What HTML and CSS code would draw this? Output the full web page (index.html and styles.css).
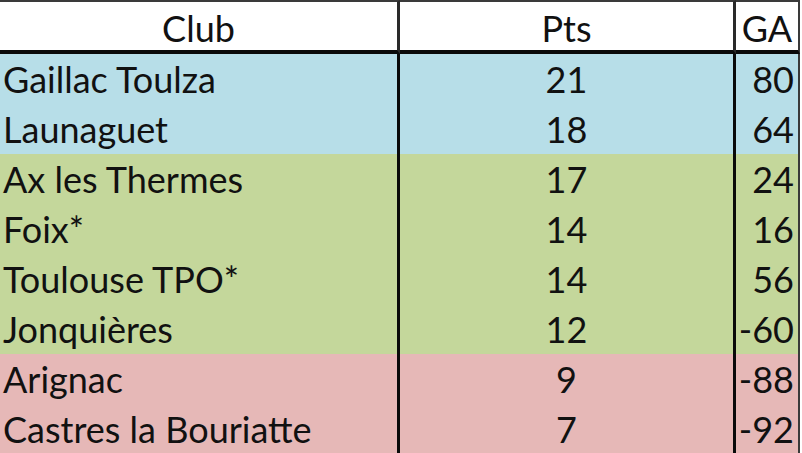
FILE: index.html
```html
<!DOCTYPE html>
<html lang="fr">
<head>
<meta charset="utf-8">
<title>Classement</title>
<link rel="stylesheet" href="styles.css">
</head>
<body>
<div class="table">
  <div class="cell head c-club">Club</div>
  <div class="cell head c-pts">Pts</div>
  <div class="cell head c-ga">GA</div>

  <div class="cell blue c-club name">Gaillac Toulza</div>
  <div class="cell blue c-pts">21</div>
  <div class="cell blue c-ga num">80</div>

  <div class="cell blue c-club name">Launaguet</div>
  <div class="cell blue c-pts">18</div>
  <div class="cell blue c-ga num">64</div>

  <div class="cell green c-club name">Ax les Thermes</div>
  <div class="cell green c-pts">17</div>
  <div class="cell green c-ga num">24</div>

  <div class="cell green c-club name">Foix*</div>
  <div class="cell green c-pts">14</div>
  <div class="cell green c-ga num">16</div>

  <div class="cell green c-club name">Toulouse TPO*</div>
  <div class="cell green c-pts">14</div>
  <div class="cell green c-ga num">56</div>

  <div class="cell green c-club name">Jonquières</div>
  <div class="cell green c-pts">12</div>
  <div class="cell green c-ga num">-60</div>

  <div class="cell pink c-club name">Arignac</div>
  <div class="cell pink c-pts">9</div>
  <div class="cell pink c-ga num">-88</div>

  <div class="cell pink c-club name">Castres la Bouriatte</div>
  <div class="cell pink c-pts">7</div>
  <div class="cell pink c-ga num">-92</div>
</div>
</body>
</html>
```

FILE: styles.css
```css
html, body {
  margin: 0;
  padding: 0;
  background: #ffffff;
}

body {
  overflow: hidden;
  font-family: Lato, "Open Sans", sans-serif;
  font-size: 36px;
  color: #111111;
}

.table {
  display: grid;
  grid-template-columns: 400px 336px 64px;
  width: 800px;
}

.cell {
  box-sizing: border-box;
  white-space: nowrap;
  overflow: hidden;
  text-align: center;
  height: 50px;
  line-height: 44px;
  padding-top: 3px;
  padding-bottom: 3px;
}

.c-club,
.c-pts {
  border-right: 3px solid #0a0a0a;
}

.c-ga {
  border-right: 2px solid #3a3a3a;
}

.head {
  background: #ffffff;
  height: 54px;
  border-top: 2px solid #3a3a3a;
  border-bottom: 4px solid #0a0a0a;
  padding-top: 4px;
  padding-bottom: 0;
  line-height: 44px;
}

.head.c-club,
.head.c-pts {
  border-right: 3px solid #2a2a2a;
}

.name {
  text-align: left;
  padding-left: 3px;
}

.num {
  text-align: right;
  padding-right: 4px;
}

.blue {
  background: #b7dee8;
}

.green {
  background: #c4d79b;
}

.pink {
  background: #e6b8b7;
}
```
